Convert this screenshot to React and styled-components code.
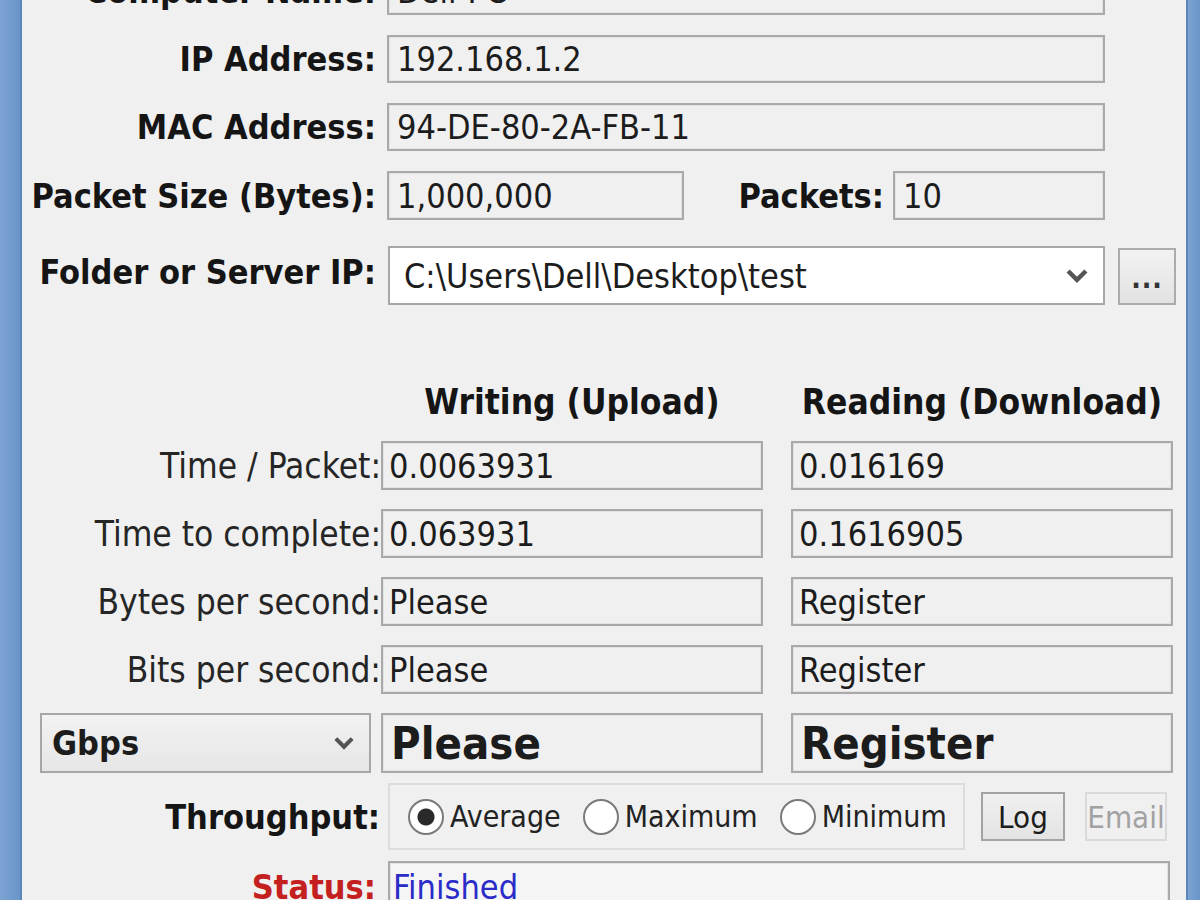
import React from "react";
import styled, { createGlobalStyle } from "styled-components";

const FONT = `"DejaVu Sans Condensed", "DejaVu Sans", "Liberation Sans", sans-serif`;

const GlobalStyle = createGlobalStyle`
    html, body {
        margin: 0;
        padding: 0;
        background: #f0f0f0;
        overflow: hidden;
    }
    * {
        box-sizing: border-box;
    }
`;

const Window = styled.div`
    display: flex;
    width: 1200px;
    height: 900px;
    overflow: hidden;
    font-family: ${FONT};
    font-stretch: condensed;
`;

const Frame = styled.div`
    width: ${p => p.$w}px;
    flex-shrink: 0;
    background: linear-gradient(to right, #7ba3d3, #6a95c8);
    border-${p => p.$side === "left" ? "right" : "left"}: 2px solid #5a86ba;
`;

const Client = styled.div`
    flex: 1;
    background: #f0f0f0;
    overflow: hidden;
`;

const Form = styled.div`
    margin-top: -33px;
    display: flex;
    flex-direction: column;
`;

const Row = styled.div`
    display: flex;
    align-items: ${p => p.$top ? "flex-start" : "center"};
    height: ${p => p.$h || 48}px;
    margin-bottom: ${p => p.$mb ?? 20}px;
    margin-left: ${p => p.$ml || 0}px;
`;

const Label = styled.div`
    width: ${p => p.$w}px;
    margin-right: ${p => p.$gap || 0}px;
    text-align: right;
    white-space: nowrap;
    font-size: ${p => p.$regular ? 35 : 34}px;
    font-weight: ${p => p.$regular ? 400 : 700};
    color: ${p => p.$color || "#151515"};
    flex-shrink: 0;
`;

const TextBox = styled.div`
    width: ${p => p.$w}px;
    height: 100%;
    flex-shrink: 0;
    display: flex;
    align-items: center;
    padding-left: ${p => p.$pad ?? 8}px;
    background: ${p => p.$bg || "#f0f0f0"};
    border: 2px solid #a9a9a9;
    box-shadow: inset 0 0 0 1px #e2e2e2;
    font-size: ${p => p.$big ? 45 : 34}px;
    font-weight: ${p => p.$big ? 700 : 400};
    color: ${p => p.$color || "#1c1c1c"};
    white-space: nowrap;
    overflow: hidden;
    margin-right: ${p => p.$mr || 0}px;
`;

const Combo = styled.div`
    width: ${p => p.$w}px;
    height: 100%;
    flex-shrink: 0;
    display: flex;
    align-items: center;
    justify-content: space-between;
    padding: 0 14px 0 ${p => p.$pl || 14}px;
    background: ${p => p.$bg || "#fff"};
    border: 2px solid #a7a7a7;
    font-size: 34px;
    font-weight: ${p => p.$bold ? 700 : 400};
    color: #1c1c1c;
    margin-right: ${p => p.$mr || 0}px;
    margin-left: ${p => p.$ml || 0}px;
`;

const Chevron = ({ size = 24 }) => (
    <svg width={size} height={size * 0.7} viewBox="0 0 24 17">
        <polyline points="3,4 12,13 21,4" fill="none" stroke="#555" strokeWidth="4.5" />
    </svg>
);

const BrowseButton = styled.div`
    width: 58px;
    height: 57px;
    margin-left: 13px;
    margin-top: 2px;
    display: flex;
    align-items: flex-end;
    justify-content: center;
    padding-bottom: 10px;
    background: linear-gradient(#f2f2f2, #e2e2e2);
    border: 2px solid #acacac;
    font-size: 28px;
    font-weight: 700;
    line-height: 1;
    color: #333;
    letter-spacing: 1px;
`;

const Headers = styled.div`
    display: flex;
    margin: 72px 0 14px 359px;
    height: 50px;
    align-items: center;
`;

const Heading = styled.div`
    width: ${p => p.$w}px;
    margin-right: ${p => p.$mr || 0}px;
    text-align: center;
    font-size: 35px;
    font-weight: 700;
    color: #151515;
    white-space: nowrap;
`;

const Group = styled.div`
    width: 577px;
    height: 100%;
    display: flex;
    align-items: center;
    padding-left: 18px;
    border: 2px solid #dcdcdc;
    font-size: 30px;
    color: #222;
`;

const Radio = styled.label`
    display: flex;
    align-items: center;
    gap: 6px;
    margin-right: 22px;
    white-space: nowrap;

    &::before {
        content: "";
        width: 32px;
        height: 32px;
        border-radius: 50%;
        border: 2px solid #7a7a7a;
        background: ${p => p.$checked
            ? "radial-gradient(circle, #2a2a2a 0 8px, #fff 9px)"
            : "#fff"};
        flex-shrink: 0;
    }
`;

const Button = styled.div`
    width: ${p => p.$w}px;
    height: 49px;
    margin-left: ${p => p.$ml}px;
    display: flex;
    align-items: center;
    justify-content: center;
    font-size: 31px;
    color: ${p => p.$disabled ? "#a2a2a2" : "#1c1c1c"};
    background: ${p => p.$disabled ? "#f0f0f0" : "linear-gradient(#f0f0f0, #e3e3e3)"};
    border: 2px solid ${p => p.$disabled ? "#dadada" : "#a3a3a3"};
`;

const upper = [
    ["Computer Name:", "Dell-PC"],
    ["IP Address:", "192.168.1.2"],
    ["MAC Address:", "94-DE-80-2A-FB-11"],
];

const results = [
    ["Time / Packet:", "0.0063931", "0.016169"],
    ["Time to complete:", "0.063931", "0.1616905"],
    ["Bytes per second:", "Please", "Register"],
    ["Bits per second:", "Please", "Register"],
];

const App = () => {
    return (
        <>
            <GlobalStyle />
            <Window>
                <Frame $w={22} $side="left" />
                <Client>
                    <Form>
                        {upper.map(([label, value]) => (
                            <Row key={label}>
                                <Label $w={354} $gap={11}>{label}</Label>
                                <TextBox $w={718}>{value}</TextBox>
                            </Row>
                        ))}
                        <Row $h={49} $mb={26}>
                            <Label $w={354} $gap={11}>Packet Size (Bytes):</Label>
                            <TextBox $w={297}>1,000,000</TextBox>
                            <Label $w={200} $gap={9}>Packets:</Label>
                            <TextBox $w={212}>10</TextBox>
                        </Row>
                        <Row $h={59} $mb={0} $top>
                            <Label $w={354} $gap={12} style={{ lineHeight: "52px" }}>Folder or Server IP:</Label>
                            <Combo $w={717}>
                                <span>C:\Users\Dell\Desktop\test</span>
                                <Chevron />
                            </Combo>
                            <BrowseButton>...</BrowseButton>
                        </Row>

                        <Headers>
                            <Heading $w={382} $mr={28}>Writing (Upload)</Heading>
                            <Heading $w={382}>Reading (Download)</Heading>
                        </Headers>

                        {results.map(([label, up, down]) => (
                            <Row key={label} $h={49} $mb={19}>
                                <Label $w={359} $regular $color="#252525">{label}</Label>
                                <TextBox $w={382} $mr={28} $pad={6}>{up}</TextBox>
                                <TextBox $w={382} $pad={6}>{down}</TextBox>
                            </Row>
                        ))}

                        <Row $h={60} $mb={10}>
                            <Combo $w={331} $ml={18} $mr={10} $bg="linear-gradient(#f2f2f2, #e6e6e6)" $bold $pl={10}>
                                <span>Gbps</span>
                                <Chevron size={22} />
                            </Combo>
                            <TextBox $w={382} $mr={28} $big>Please</TextBox>
                            <TextBox $w={382} $big>Register</TextBox>
                        </Row>

                        <Row $h={67} $mb={11}>
                            <Label $w={358} $gap={8}>Throughput:</Label>
                            <Group>
                                <Radio $checked>Average</Radio>
                                <Radio>Maximum</Radio>
                                <Radio>Minimum</Radio>
                            </Group>
                            <Button $w={84} $ml={16}>Log</Button>
                            <Button $w={82} $ml={20} $disabled>Email</Button>
                        </Row>

                        <Row $h={52} $mb={0}>
                            <Label $w={354} $gap={12} $color="#c42020">Status:</Label>
                            <TextBox $w={782} $bg="#f5f5f5" $color="#2b2bc8" $pad={3}>Finished</TextBox>
                        </Row>
                    </Form>
                </Client>
                <Frame $w={14} $side="right" />
            </Window>
        </>
    );
};

export default App;
